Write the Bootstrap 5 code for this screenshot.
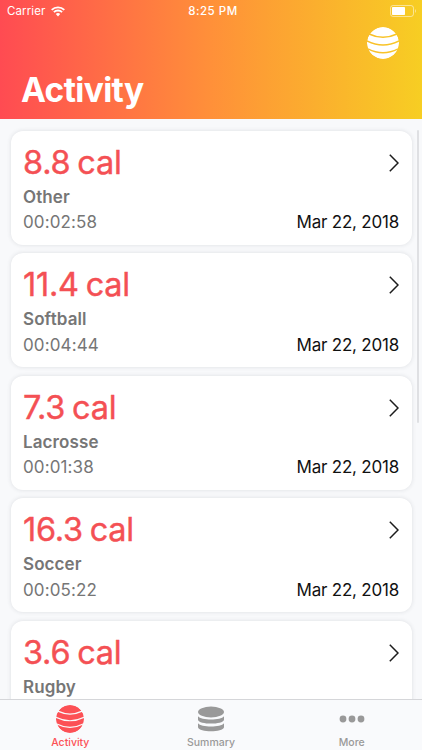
<!DOCTYPE html>
<html lang="en">
<head>
<meta charset="utf-8">
<meta name="viewport" content="width=device-width, initial-scale=1">
<title>Activity</title>
<link rel="stylesheet" href="https://cdn.jsdelivr.net/npm/bootstrap@5.3.0/dist/css/bootstrap.min.css">
<style>
  body { font-family: Inter, "Liberation Sans", sans-serif; background: #f8f9fb; color: #111; }
  .app-header { height: 118.5px; background: linear-gradient(90deg, #ff4b52 0%, #ff9039 50%, #f7ce23 100%); }
  .status-bar { height: 22px; padding: 0 5px 0 7px; font-size: 11.5px; line-height: 22px; }
  .status-bar .side { flex: 1 1 0; gap: 6px; }
  .carrier { letter-spacing: .1px; }
  .clock { font-weight: 500; letter-spacing: .5px; padding-left: 2px; }
  .header-tools { height: 42px; padding: 5px 23px 0 0; }
  .screen-title { font-size: 33.5px; line-height: 40px; font-weight: 700; padding: 6px 0 0 21px; margin: 0; letter-spacing: -.65px; }
  .feed { height: 580.5px; padding: 12px 10.5px 0; }
  .activity-card { height: 114px; flex: none; margin-bottom: 8.5px; padding: 12px 12.5px 0; border: 0; border-radius: 12px; box-shadow: 0 0 4px rgba(60,65,80,.15); }
  .calories { font-size: 32.5px; line-height: 40px; color: #f45054; letter-spacing: -.25px; word-spacing: -2px; -webkit-text-stroke: .4px #f45054; }
  .sport { font-size: 17px; line-height: 25px; font-weight: 600; color: #767676; margin-top: 2px; letter-spacing: .1px; }
  .meta { font-size: 17px; line-height: 25px; padding-top: .6px; }
  .duration { color: #767676; letter-spacing: .12px; }
  .date { color: #111; letter-spacing: -.22px; }
  .scroll-thumb { top: 11px; right: 3px; width: 2.5px; height: 293px; background: #dfe0e3; border-radius: 2px; }
  .tab-bar { height: 51px; background: #f9fafc; border-top: 1px solid #d5d6d9; }
  .tab-link { color: #999; font-size: 10.5px; line-height: 12px; font-weight: 500; padding: 5px 0 0; }
  .tab-link.active { color: #fc5055; }
  .tab-link svg { height: 28px; margin-bottom: 4px; }
</style>
<script src="https://cdn.jsdelivr.net/npm/bootstrap@5.3.0/dist/js/bootstrap.bundle.min.js"></script>
</head>
<body class="vh-100 overflow-hidden d-flex flex-column">
<svg class="position-absolute" width="0" height="0">
  <defs>
  <mask id="bands" maskUnits="userSpaceOnUse" x="0" y="0" width="32" height="32"><circle cx="16" cy="16" r="16" fill="#fff"/>
    <g fill="none" stroke="#000" stroke-width="1.4"><path d="M2 7Q16 13.600 30 7"/><path d="M0 14Q16 22 32 14"/><path d="M1 21.800Q16 29.600 31 21.800"/></g>
  </mask>
  </defs>
  <symbol id="globe" viewBox="0 0 32 32">
    <circle cx="16" cy="16" r="16" fill="currentColor" mask="url(#bands)"/>
  </symbol>
  <symbol id="chevron" viewBox="0 0 10 18"><path d="M.8 .8 9 9 .8 17.2" fill="none" stroke="#1c1c1c" stroke-width="1.5"/></symbol>
</svg>
<header class="app-header text-white flex-shrink-0">
  <div class="status-bar d-flex align-items-center">
    <div class="side d-flex align-items-center"><span class="carrier">Carrier</span>
      <svg width="14" height="11" viewBox="0 0 14 11" fill="none" stroke="#fff" stroke-width="1.8"><path d="M.7 3.9a9 9 0 0 1 12.6 0M2.9 6.2a5.8 5.8 0 0 1 8.2 0"/><path d="M4.8 8.1a3.1 3.1 0 0 1 4.4 0L7 10.4z" fill="#fff" stroke="none"/></svg>
    </div>
    <span class="clock">8:25 PM</span>
    <div class="side d-flex justify-content-end">
      <svg width="27" height="12" viewBox="0 0 27 12"><rect x=".5" y=".5" width="23" height="11" rx="2.6" fill="none" stroke="#fff" stroke-opacity=".5"/><rect x="2" y="2" width="13" height="8" rx=".8" fill="#fff"/><path d="M25 4q2 2 0 4z" fill="#fff" opacity=".5"/></svg>
    </div>
  </div>
  <div class="header-tools d-flex justify-content-end"><svg width="32" height="32"><use href="#globe"/></svg></div>
  <h1 class="screen-title">Activity</h1>
</header>
<main class="feed d-flex flex-column flex-shrink-0 overflow-hidden position-relative">
  <article class="card activity-card"><div class="d-flex justify-content-between align-items-center"><span class="calories">8.8 cal</span><svg width="10" height="18"><use href="#chevron"/></svg></div><div class="sport">Other</div><div class="meta d-flex justify-content-between"><span class="duration">00:02:58</span><span class="date">Mar 22, 2018</span></div></article>
  <article class="card activity-card"><div class="d-flex justify-content-between align-items-center"><span class="calories">11.4 cal</span><svg width="10" height="18"><use href="#chevron"/></svg></div><div class="sport">Softball</div><div class="meta d-flex justify-content-between"><span class="duration">00:04:44</span><span class="date">Mar 22, 2018</span></div></article>
  <article class="card activity-card"><div class="d-flex justify-content-between align-items-center"><span class="calories">7.3 cal</span><svg width="10" height="18"><use href="#chevron"/></svg></div><div class="sport">Lacrosse</div><div class="meta d-flex justify-content-between"><span class="duration">00:01:38</span><span class="date">Mar 22, 2018</span></div></article>
  <article class="card activity-card"><div class="d-flex justify-content-between align-items-center"><span class="calories">16.3 cal</span><svg width="10" height="18"><use href="#chevron"/></svg></div><div class="sport">Soccer</div><div class="meta d-flex justify-content-between"><span class="duration">00:05:22</span><span class="date">Mar 22, 2018</span></div></article>
  <article class="card activity-card"><div class="d-flex justify-content-between align-items-center"><span class="calories">3.6 cal</span><svg width="10" height="18"><use href="#chevron"/></svg></div><div class="sport">Rugby</div></article>
  <div class="scroll-thumb position-absolute"></div>
</main>
<nav class="tab-bar nav nav-fill flex-nowrap flex-shrink-0">
  <a class="nav-link tab-link active d-flex flex-column align-items-center col-4" href="#"><svg width="28" viewBox="0 0 32 32"><use href="#globe"/></svg>Activity</a>
  <a class="nav-link tab-link d-flex flex-column align-items-center col-4" href="#"><svg width="28" viewBox="0 0 28 28" fill="currentColor"><ellipse cx="14" cy="7" rx="13" ry="5.400"/><path d="M1 11.200c3 4.300 23 4.300 26 0v3.500c-1 5.200-25 5.200-26 0zM1 18.200c3 4.300 23 4.300 26 0v4c-1 5.500-25 5.500-26 0z"/></svg>Summary</a>
  <a class="nav-link tab-link d-flex flex-column align-items-center col-4" href="#"><svg width="26" viewBox="0 0 26 28" fill="currentColor"><circle cx="4" cy="14" r="3.4"/><circle cx="13" cy="14" r="3.4"/><circle cx="22" cy="14" r="3.4"/></svg>More</a>
</nav>
</body>
</html>
